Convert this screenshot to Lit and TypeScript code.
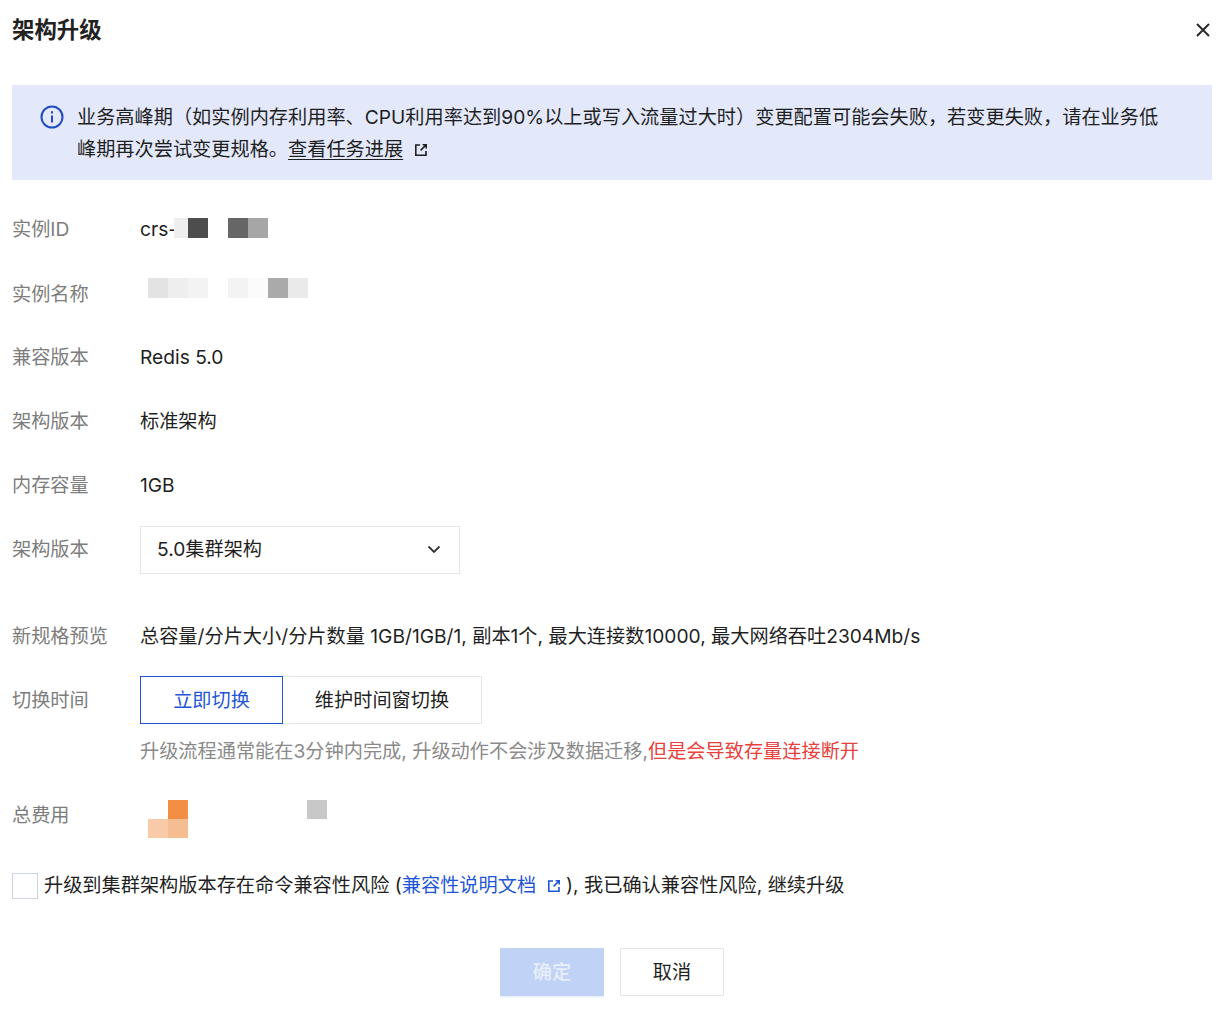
import { LitElement, html, css, svg } from "lit";
import { customElement } from "lit/decorators.js";

const blocks = (list: (string | null)[]) =>
  html`<span class="blocks">${list.map(
    (c) => html`<i class="block" style=${c ? `background:${c}` : ""}></i>`
  )}</span>`;

const external = html`<svg class="ext" viewBox="0 0 16 16" fill="none" stroke="currentColor" stroke-width="1.6">
  <path d="M7 3H2.8v10.2H13V9" /><path d="M9.6 2.8h3.6v3.6M13.2 2.8 7.6 8.4" />
</svg>`;

@customElement("app-root")
export class AppRoot extends LitElement {
  static styles = css`
    :host {
      display: block;
      width: 1224px;
      height: 1012px;
      overflow: hidden;
      background: #fff;
      color: #1f1f1f;
      font-family: Inter, "Noto Sans CJK SC", sans-serif;
      font-size: 19.2px;
      line-height: 32px;
    }
    .wrap {
      padding: 0 12px;
      display: flex;
      flex-direction: column;
    }
    .head {
      height: 85px;
      display: flex;
      justify-content: space-between;
      align-items: flex-start;
    }
    h1 {
      margin: 14px 0 0;
      font-size: 22.4px;
      line-height: 32px;
      font-weight: 700;
      color: #222;
    }
    .close {
      width: 16px;
      height: 16px;
      margin: 22px 1px 0 0;
      color: #2b2b2b;
    }
    .alert {
      height: 95px;
      box-sizing: border-box;
      background: #e3e9fb;
      padding: 16px 28px;
      display: flex;
      gap: 13px;
    }
    .alert .info {
      flex: none;
      width: 24px;
      height: 24px;
      margin-top: 4px;
      color: #1f4cc4;
    }
    .alert p {
      margin: 0;
      width: 1085px;
    }
    .alert a {
      color: inherit;
      text-decoration: underline;
      text-underline-offset: 3px;
    }
    .ext {
      width: 16px;
      height: 16px;
      margin-left: 9px;
      vertical-align: -2px;
    }
    .alert .ext {
      margin-left: 10px;
    }
    .rows {
      padding-top: 18px;
    }
    .row {
      display: flex;
      height: 64px;
      align-items: center;
    }
    .label {
      width: 128px;
      flex: none;
      color: #7d7d7d;
    }
    .val {
      display: flex;
      align-items: center;
    }
    .lift .label,
    .lift .val {
      padding-bottom: 2px;
    }
    .blocks {
      display: inline-flex;
    }
    .block {
      display: block;
      width: 20px;
      height: 20px;
    }
    .id .blocks {
      margin: 0 0 2px -3px;
    }
    .id .block:first-child {
      width: 14px;
    }
    .name .val {
      margin: -12px 0 0 8px;
    }
    .select {
      width: 320px;
      height: 48px;
      box-sizing: border-box;
      border: 1px solid #e6e6ea;
      padding: 0 16px;
      display: flex;
      align-items: center;
      justify-content: space-between;
    }
    .select span {
      padding-bottom: 2px;
    }
    .select svg {
      width: 16px;
      height: 16px;
      margin-right: 1px;
      color: #333;
    }
    .preview {
      margin-top: 22px;
    }
    .switch {
      display: flex;
      height: 48px;
    }
    .opt {
      box-sizing: border-box;
      height: 48px;
      display: flex;
      align-items: center;
      justify-content: center;
      border: 1px solid #e6e6ea;
    }
    .opt.on {
      width: 143px;
      border-color: #1f56d8;
      color: #1f56d8;
    }
    .opt.off {
      width: 199px;
      border-left: none;
    }
    .hint {
      margin: 3px 0 0 128px;
      color: #8a8a8a;
    }
    .hint b {
      font-weight: 400;
      color: #e8403d;
    }
    .cost {
      height: 64px;
      margin-top: 17px;
      display: flex;
      align-items: center;
    }
    .cost .label {
      padding-bottom: 2px;
    }
    .cost-grid {
      display: grid;
      grid-template-columns: 20px 20px 119px 20px;
      grid-auto-rows: 19px;
      margin-left: 8px;
      margin-top: 6px;
    }
    .cost-grid .block {
      width: 100%;
      height: 100%;
    }
    .agree {
      display: flex;
      align-items: center;
      margin-top: 22px;
      height: 32px;
    }
    .agree > span:last-child {
      padding-bottom: 2px;
    }
    .box {
      width: 26px;
      height: 26px;
      box-sizing: border-box;
      border: 1px solid #ced4de;
      margin-right: 6px;
    }
    .agree a {
      color: #1f56d8;
      text-decoration: none;
    }
    .agree .ext {
      margin-left: 10px;
      margin-right: 4px;
    }
    .foot {
      display: flex;
      justify-content: center;
      gap: 16px;
      margin-top: 46px;
    }
    .btn {
      box-sizing: border-box;
      width: 104px;
      height: 48px;
      display: flex;
      align-items: center;
      justify-content: center;
    }
    .btn.ok {
      background: #c0d2f6;
      color: #e9effb;
      font-weight: 500;
      box-shadow: 0 2px 0 #eef3fd;
    }
    .btn.cancel {
      border: 1px solid #e6e6ea;
    }
  `;

  render() {
    return html`<div class="wrap">
      <header class="head">
        <h1>架构升级</h1>
        <svg class="close" viewBox="0 0 16 16" fill="none" stroke="currentColor" stroke-width="2">
          <path d="M2 2l12 12M14 2 2 14" />
        </svg>
      </header>
      <section class="alert">
        <svg class="info" viewBox="0 0 24 24" fill="none" stroke="currentColor" stroke-width="2">
          <circle cx="12" cy="12" r="10.5" />
          ${svg`<path d="M12 10.5v7" /><path d="M12 6.2v2.2" />`}
        </svg>
        <p>
          业务高峰期（如实例内存利用率、CPU利用率达到90%以上或写入流量过大时）变更配置可能会失败，若变更失败，请在业务低峰期再次尝试变更规格。<a>查看任务进展</a>${external}
        </p>
      </section>
      <section class="rows">
        <div class="row id lift">
          <div class="label">实例ID</div>
          <div class="val">
            crs-${blocks(["#eeeeee", "#4d4d4d", null, "#666666", "#a6a6a6"])}
          </div>
        </div>
        <div class="row name">
          <div class="label">实例名称</div>
          <div class="val">
            ${blocks(["#e3e3e3", "#eeeeee", "#f3f3f3", null, "#f3f3f3", "#fbfbfb", "#aaaaaa", "#eaeaea"])}
          </div>
        </div>
        <div class="row lift"><div class="label">兼容版本</div><div class="val">Redis 5.0</div></div>
        <div class="row lift"><div class="label">架构版本</div><div class="val">标准架构</div></div>
        <div class="row lift"><div class="label">内存容量</div><div class="val">1GB</div></div>
        <div class="row lift">
          <div class="label">架构版本</div>
          <div class="select">
            <span>5.0集群架构</span>
            <svg viewBox="0 0 16 16" fill="none" stroke="currentColor" stroke-width="1.8"><path d="M2.5 4.5 8 10l5.5-5.5" /></svg>
          </div>
        </div>
        <div class="row preview">
          <div class="label">新规格预览</div>
          <div class="val">总容量/分片大小/分片数量 1GB/1GB/1, 副本1个, 最大连接数10000, 最大网络吞吐2304Mb/s</div>
        </div>
        <div class="row">
          <div class="label">切换时间</div>
          <div class="switch">
            <div class="opt on">立即切换</div>
            <div class="opt off">维护时间窗切换</div>
          </div>
        </div>
        <div class="hint">升级流程通常能在3分钟内完成, 升级动作不会涉及数据迁移,<b>但是会导致存量连接断开</b></div>
        <div class="cost">
          <div class="label">总费用</div>
          <div class="cost-grid">
            ${[null, "#f28f45", null, "#c8c8c8", "#f9caa8", "#f7bd92"].map(
              (c) => html`<i class="block" style=${c ? `background:${c}` : ""}></i>`
            )}
          </div>
        </div>
        <div class="agree">
          <span class="box"></span>
          <span>升级到集群架构版本存在命令兼容性风险 (<a>兼容性说明文档${external}</a>), 我已确认兼容性风险, 继续升级</span>
        </div>
      </section>
      <footer class="foot">
        <div class="btn ok">确定</div>
        <div class="btn cancel">取消</div>
      </footer>
    </div>`;
  }
}
